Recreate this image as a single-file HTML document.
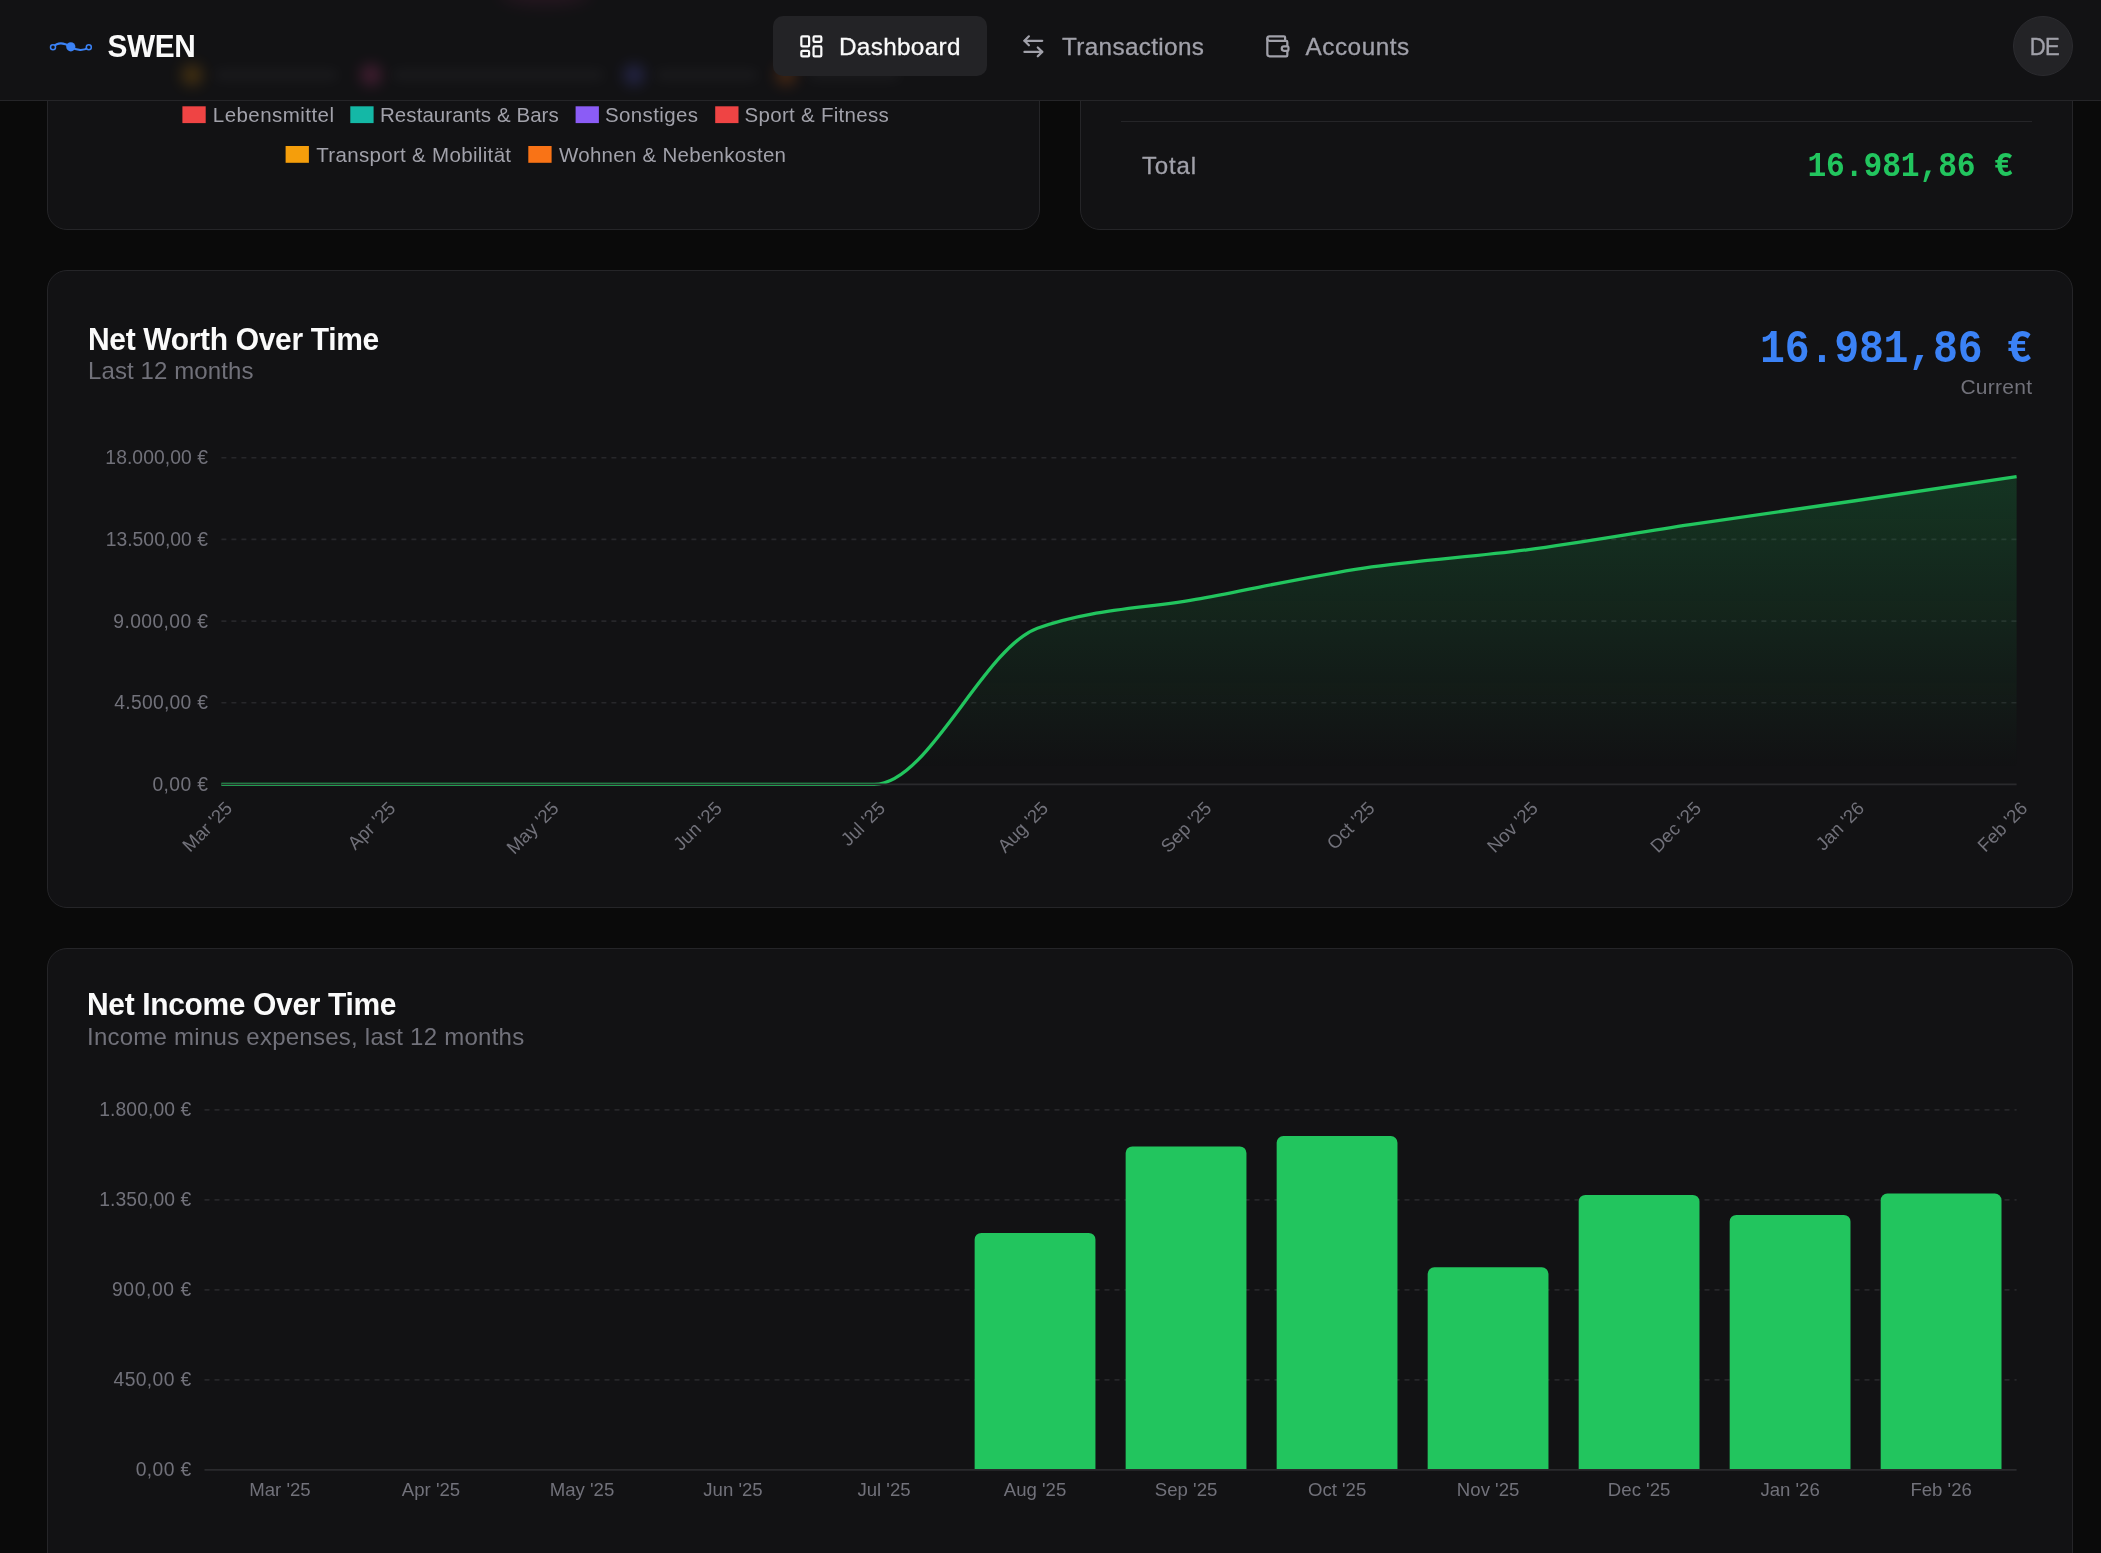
<!DOCTYPE html>
<html lang="en"><head><meta charset="utf-8"><title>SWEN – Dashboard</title>
<style>
*{box-sizing:border-box;margin:0;padding:0}
html,body{width:2101px;height:1553px;overflow:hidden;background:#0a0a0a;}
body{position:relative;font-family:"Liberation Sans", sans-serif;color:#fafafa;-webkit-font-smoothing:antialiased}
.t{position:absolute;white-space:pre;}
.m{font-family:"Liberation Mono", monospace}
.card{position:absolute;background:#121214;border:1px solid #252528;border-radius:20px;}
header{will-change:transform;position:absolute;left:0;top:0;width:2101px;height:101px;background:#121214;border-bottom:1px solid #252528;z-index:5;overflow:hidden}
svg{position:absolute;left:0;top:0;overflow:visible}
.sw{position:absolute;width:23.3px;height:17px}
nav a{position:absolute;display:block;text-decoration:none}
.blob{position:absolute;border-radius:50%;filter:blur(9px)}
</style></head><body>

<main style="position:absolute;left:0;top:0;width:2101px;height:1553px;overflow:hidden;will-change:transform">
<section class="card" style="left:47px;top:-300px;width:993px;height:530px"></section>
<ul style="list-style:none">
<li><div class="t" id="lg1_0" style="top:104.85px;font-size:20.5px;line-height:20.5px;color:#a1a1aa;font-weight:400;letter-spacing:0.455px;left:212.80px;">Lebensmittel</div></li>
<li><div class="t" id="lg1_1" style="top:104.85px;font-size:20.5px;line-height:20.5px;color:#a1a1aa;font-weight:400;letter-spacing:0.059px;left:380.00px;">Restaurants &amp; Bars</div></li>
<li><div class="t" id="lg1_2" style="top:104.85px;font-size:20.5px;line-height:20.5px;color:#a1a1aa;font-weight:400;letter-spacing:0.375px;left:605.00px;">Sonstiges</div></li>
<li><div class="t" id="lg1_3" style="top:104.85px;font-size:20.5px;line-height:20.5px;color:#a1a1aa;font-weight:400;letter-spacing:0.289px;left:744.60px;">Sport &amp; Fitness</div></li>
<li><div class="t" id="lg2_0" style="top:144.65px;font-size:20.5px;line-height:20.5px;color:#a1a1aa;font-weight:400;letter-spacing:0.325px;left:316.20px;">Transport &amp; Mobilität</div></li>
<li><div class="t" id="lg2_1" style="top:144.65px;font-size:20.5px;line-height:20.5px;color:#a1a1aa;font-weight:400;letter-spacing:0.269px;left:559.00px;">Wohnen &amp; Nebenkosten</div></li>
</ul>
<svg width="2101" height="180" viewBox="0 0 2101 180"><rect x="182.4" y="106.3" width="23.3" height="16.8" fill="#ef4444"/><rect x="350.3" y="106.3" width="23.3" height="16.8" fill="#14b8a6"/><rect x="575.6" y="106.3" width="23.3" height="16.8" fill="#8b5cf6"/><rect x="715.2" y="106.3" width="23.3" height="16.8" fill="#ef4444"/><rect x="285.6" y="146.0" width="23.3" height="16.8" fill="#f59e0b"/><rect x="528.3" y="146.0" width="23.3" height="16.8" fill="#f97316"/></svg>
<section class="card" style="left:1080px;top:-300px;width:993px;height:530px"></section>
<div style="position:absolute;left:1121px;top:121px;width:911px;height:1px;background:#252528"></div>
<div class="t" id="total" style="top:153.98px;font-size:24px;line-height:24px;color:#a1a1aa;font-weight:400;letter-spacing:0.850px;left:1142.00px;-webkit-text-stroke:0.3px #a1a1aa;">Total</div>
<div class="t m" id="totalv" style="top:152.00px;font-size:31.3px;line-height:31.3px;color:#22c55e;font-weight:700;letter-spacing:-0.100px;right:88.00px;margin-right:0.100px;transform:scaleY(1.13);transform-origin:50% 24.00px;">16.981,86 €</div>
<section class="card" style="left:47px;top:270px;width:2026px;height:638px"></section>
<div class="t" id="nw_title" style="top:324.81px;font-size:30px;line-height:30px;color:#fafafa;font-weight:700;letter-spacing:-0.333px;left:88.00px;transform:scaleY(1.07);transform-origin:50% 25.40px;">Net Worth Over Time</div>
<div class="t" id="nw_sub" style="top:358.68px;font-size:24px;line-height:24px;color:#71717a;font-weight:400;letter-spacing:0.100px;left:88.00px;">Last 12 months</div>
<div class="t m" id="nw_val" style="top:330.28px;font-size:41.5px;line-height:41.5px;color:#3b82f6;font-weight:700;letter-spacing:-0.200px;right:69.00px;margin-right:0.200px;transform:scaleY(1.13);transform-origin:50% 31.82px;">16.981,86 €</div>
<div class="t" id="nw_cur" style="top:376.22px;font-size:21px;line-height:21px;color:#71717a;font-weight:400;letter-spacing:0.249px;right:69.00px;margin-right:-0.249px;">Current</div>
<svg width="2101" height="1553" viewBox="0 0 2101 1553" font-family='"Liberation Sans", sans-serif'>
<defs><linearGradient id="gnw" gradientUnits="userSpaceOnUse" x1="0" y1="476" x2="0" y2="784"><stop offset="0.05" stop-color="#22c55e" stop-opacity="0.185"/><stop offset="0.95" stop-color="#22c55e" stop-opacity="0"/></linearGradient></defs>
<g stroke="#27272a" stroke-width="1.67" stroke-dasharray="5 5" fill="none">
<line x1="221.4" y1="457.75" x2="2016.6" y2="457.75"/>
<line x1="221.4" y1="539.41" x2="2016.6" y2="539.41"/>
<line x1="221.4" y1="621.08" x2="2016.6" y2="621.08"/>
<line x1="221.4" y1="702.74" x2="2016.6" y2="702.74"/>
</g>
<path d="M221.40,784.40C275.80,784.40 330.20,784.40 384.60,784.40C439.00,784.40 493.40,784.40 547.80,784.40C602.20,784.40 656.60,784.40 711.00,784.40C765.40,784.40 819.80,784.40 874.20,784.40C928.60,784.40 983.00,648.10 1037.40,628.30C1091.80,608.50 1146.20,608.63 1200.60,598.60C1255.00,588.57 1309.40,576.23 1363.80,568.10C1418.20,559.97 1472.60,557.05 1527.00,549.80C1581.40,542.55 1635.80,532.73 1690.20,524.60C1744.60,516.47 1799.00,509.00 1853.40,501.00C1907.80,493.00 1962.20,484.80 2016.60,476.60L2016.60,784.4L221.40,784.4Z" fill="url(#gnw)"/>
<path d="M221.40,784.40C275.80,784.40 330.20,784.40 384.60,784.40C439.00,784.40 493.40,784.40 547.80,784.40C602.20,784.40 656.60,784.40 711.00,784.40C765.40,784.40 819.80,784.40 874.20,784.40C928.60,784.40 983.00,648.10 1037.40,628.30C1091.80,608.50 1146.20,608.63 1200.60,598.60C1255.00,588.57 1309.40,576.23 1363.80,568.10C1418.20,559.97 1472.60,557.05 1527.00,549.80C1581.40,542.55 1635.80,532.73 1690.20,524.60C1744.60,516.47 1799.00,509.00 1853.40,501.00C1907.80,493.00 1962.20,484.80 2016.60,476.60" fill="none" stroke="#22c55e" stroke-width="3.33" stroke-linejoin="round"/>
<line x1="221.4" y1="784.4" x2="2016.6" y2="784.4" stroke="#2a2a2d" stroke-width="1.67"/>
<g fill="#71717a" font-size="19.3" text-anchor="end">
<text x="208.08" y="464.4" letter-spacing="0.080">18.000,00 €</text>
<text x="208.05" y="546.0" letter-spacing="0.050">13.500,00 €</text>
<text x="208.39" y="627.7" letter-spacing="0.389">9.000,00 €</text>
<text x="208.28" y="709.3" letter-spacing="0.278">4.500,00 €</text>
<text x="208.40" y="791.0" letter-spacing="0.400">0,00 €</text>
</g>
<g fill="#71717a" font-size="18.6" text-anchor="end">
<text x="233.4" y="809.5" transform="rotate(-45 233.4 809.5)">Mar '25</text>
<text x="396.6" y="809.5" transform="rotate(-45 396.6 809.5)">Apr '25</text>
<text x="559.8" y="809.5" transform="rotate(-45 559.8 809.5)">May '25</text>
<text x="723.0" y="809.5" transform="rotate(-45 723.0 809.5)">Jun '25</text>
<text x="886.2" y="809.5" transform="rotate(-45 886.2 809.5)">Jul '25</text>
<text x="1049.4" y="809.5" transform="rotate(-45 1049.4 809.5)">Aug '25</text>
<text x="1212.6" y="809.5" transform="rotate(-45 1212.6 809.5)">Sep '25</text>
<text x="1375.8" y="809.5" transform="rotate(-45 1375.8 809.5)">Oct '25</text>
<text x="1539.0" y="809.5" transform="rotate(-45 1539.0 809.5)">Nov '25</text>
<text x="1702.2" y="809.5" transform="rotate(-45 1702.2 809.5)">Dec '25</text>
<text x="1865.4" y="809.5" transform="rotate(-45 1865.4 809.5)">Jan '26</text>
<text x="2028.6" y="809.5" transform="rotate(-45 2028.6 809.5)">Feb '26</text>
</g>
</svg>
<section class="card" style="left:47px;top:948px;width:2026px;height:700px"></section>
<div class="t" id="ni_title" style="top:989.81px;font-size:30px;line-height:30px;color:#fafafa;font-weight:700;letter-spacing:-0.360px;left:87.00px;transform:scaleY(1.07);transform-origin:50% 25.40px;">Net Income Over Time</div>
<div class="t" id="ni_sub" style="top:1024.78px;font-size:24px;line-height:24px;color:#71717a;font-weight:400;letter-spacing:0.249px;left:87.00px;">Income minus expenses, last 12 months</div>
<svg width="2101" height="1553" viewBox="0 0 2101 1553" font-family='"Liberation Sans", sans-serif'>
<g stroke="#27272a" stroke-width="1.67" stroke-dasharray="5 5" fill="none">
<line x1="204.5" y1="1109.8" x2="2016.6" y2="1109.8"/>
<line x1="204.5" y1="1199.8" x2="2016.6" y2="1199.8"/>
<line x1="204.5" y1="1289.8" x2="2016.6" y2="1289.8"/>
<line x1="204.5" y1="1379.8" x2="2016.6" y2="1379.8"/>
</g>
<g fill="#22c55e">
<path d="M974.64,1469.8V1239.57a6.67,6.67 0 0 1 6.67,-6.67h107.47a6.67,6.67 0 0 1 6.67,6.67V1469.8Z"/>
<path d="M1125.65,1469.8V1153.07a6.67,6.67 0 0 1 6.67,-6.67h107.47a6.67,6.67 0 0 1 6.67,6.67V1469.8Z"/>
<path d="M1276.66,1469.8V1142.77a6.67,6.67 0 0 1 6.67,-6.67h107.47a6.67,6.67 0 0 1 6.67,6.67V1469.8Z"/>
<path d="M1427.67,1469.8V1273.87a6.67,6.67 0 0 1 6.67,-6.67h107.47a6.67,6.67 0 0 1 6.67,6.67V1469.8Z"/>
<path d="M1578.68,1469.8V1201.57a6.67,6.67 0 0 1 6.67,-6.67h107.47a6.67,6.67 0 0 1 6.67,6.67V1469.8Z"/>
<path d="M1729.68,1469.8V1221.57a6.67,6.67 0 0 1 6.67,-6.67h107.47a6.67,6.67 0 0 1 6.67,6.67V1469.8Z"/>
<path d="M1880.69,1469.8V1200.17a6.67,6.67 0 0 1 6.67,-6.67h107.47a6.67,6.67 0 0 1 6.67,6.67V1469.8Z"/>
</g>
<line x1="204.5" y1="1469.8" x2="2016.6" y2="1469.8" stroke="#2a2a2d" stroke-width="1.67"/>
<g fill="#71717a" font-size="19.3" text-anchor="end">
<text x="191.29" y="1116.4" letter-spacing="0.089">1.800,00 €</text>
<text x="191.29" y="1206.4" letter-spacing="0.089">1.350,00 €</text>
<text x="191.79" y="1296.4" letter-spacing="0.586">900,00 €</text>
<text x="191.57" y="1386.4" letter-spacing="0.371">450,00 €</text>
<text x="191.56" y="1476.4" letter-spacing="0.360">0,00 €</text>
</g>
<g fill="#71717a" font-size="18.6" text-anchor="middle">
<text x="280.0" y="1495.6">Mar '25</text>
<text x="431.0" y="1495.6">Apr '25</text>
<text x="582.0" y="1495.6">May '25</text>
<text x="733.0" y="1495.6">Jun '25</text>
<text x="884.0" y="1495.6">Jul '25</text>
<text x="1035.0" y="1495.6">Aug '25</text>
<text x="1186.1" y="1495.6">Sep '25</text>
<text x="1337.1" y="1495.6">Oct '25</text>
<text x="1488.1" y="1495.6">Nov '25</text>
<text x="1639.1" y="1495.6">Dec '25</text>
<text x="1790.1" y="1495.6">Jan '26</text>
<text x="1941.1" y="1495.6">Feb '26</text>
</g>
</svg>
</main>
<header>
<div class="blob" style="left:181.0px;top:64px;width:22px;height:22px;background:#f59e0b;opacity:.2;filter:blur(7px)"></div>
<div class="blob" style="left:360.0px;top:64px;width:22px;height:22px;background:#ec4899;opacity:.2;filter:blur(7px)"></div>
<div class="blob" style="left:622.6px;top:64px;width:22px;height:22px;background:#6366f1;opacity:.2;filter:blur(7px)"></div>
<div class="blob" style="left:775.0px;top:64px;width:22px;height:22px;background:#f97316;opacity:.2;filter:blur(7px)"></div>
<div class="blob" style="left:214px;top:69px;width:124px;height:12px;border-radius:6px;background:#a1a1aa;opacity:.05;filter:blur(6px)"></div>
<div class="blob" style="left:392px;top:69px;width:212px;height:12px;border-radius:6px;background:#a1a1aa;opacity:.05;filter:blur(6px)"></div>
<div class="blob" style="left:655px;top:69px;width:103px;height:12px;border-radius:6px;background:#a1a1aa;opacity:.05;filter:blur(6px)"></div>
<div class="blob" style="left:808px;top:69px;width:92px;height:12px;border-radius:6px;background:#a1a1aa;opacity:.05;filter:blur(6px)"></div>
<div class="blob" style="left:500px;top:-18px;width:90px;height:22px;background:#ec4899;opacity:.10"></div>
<svg width="46" height="20" viewBox="0 0 46 20" style="left:48px;top:36.5px">
<path d="M5.2 10C9 5.6 14.5 4.6 22.6 9.6C28.5 13.6 35.5 14.2 40.6 10.4" fill="none" stroke="#3b82f6" stroke-width="2.2" stroke-linecap="round"/>
<circle cx="5" cy="10.2" r="2.5" fill="#121214" stroke="#3b82f6" stroke-width="1.5"/>
<circle cx="40.8" cy="10.2" r="2.5" fill="#121214" stroke="#3b82f6" stroke-width="1.5"/>
<circle cx="22.8" cy="9.8" r="4.6" fill="#3b82f6"/>
</svg>
<div class="t" id="swen" style="top:32.37px;font-size:29.8px;line-height:29.8px;color:#fafafa;font-weight:700;letter-spacing:-0.333px;left:107.50px;transform:scaleY(1.075);transform-origin:50% 25.23px;">SWEN</div>
<nav>
<a style="left:772.6px;top:16px;width:214.7px;height:60px;border-radius:10px;background:#232326"></a>
<svg width="26.67" height="26.67" viewBox="0 0 24 24" style="left:798.2px;top:33.1px" stroke="#fafafa" fill="none" stroke-width="2" stroke-linecap="round" stroke-linejoin="round"><rect width="7" height="9" x="3" y="3" rx="1"/><rect width="7" height="5" x="14" y="3" rx="1"/><rect width="7" height="9" x="14" y="12" rx="1"/><rect width="7" height="5" x="3" y="16" rx="1"/></svg>
<div class="t" id="n_dash" style="top:35.23px;font-size:24.3px;line-height:24.3px;color:#fafafa;font-weight:400;letter-spacing:0.328px;left:839.00px;-webkit-text-stroke:0.3px #fafafa;">Dashboard</div>
<svg width="26.67" height="26.67" viewBox="0 0 24 24" style="left:1020.1px;top:33.2px" stroke="#a1a1aa" fill="none" stroke-width="2" stroke-linecap="round" stroke-linejoin="round"><path d="M8 3 4 7l4 4"/><path d="M4 7h16"/><path d="m16 21 4-4-4-4"/><path d="M20 17H4"/></svg>
<div class="t" id="n_tx" style="top:35.23px;font-size:24.3px;line-height:24.3px;color:#a1a1aa;font-weight:400;letter-spacing:0.342px;left:1062.00px;-webkit-text-stroke:0.3px #a1a1aa;">Transactions</div>
<svg width="26.67" height="26.67" viewBox="0 0 24 24" style="left:1264.3px;top:33.3px" stroke="#a1a1aa" fill="none" stroke-width="2" stroke-linecap="round" stroke-linejoin="round"><path d="M19 7V4a1 1 0 0 0-1-1H5a2 2 0 0 0 0 4h15a1 1 0 0 1 1 1v4h-3a2 2 0 0 0 0 4h3a1 1 0 0 0 1-1v-2a1 1 0 0 0-1-1"/><path d="M3 5v14a2 2 0 0 0 2 2h15a1 1 0 0 0 1-1v-4"/></svg>
<div class="t" id="n_acc" style="top:35.23px;font-size:24.3px;line-height:24.3px;color:#a1a1aa;font-weight:400;letter-spacing:0.504px;left:1305.60px;-webkit-text-stroke:0.3px #a1a1aa;">Accounts</div>
</nav>
<div style="position:absolute;left:2013px;top:16px;width:60px;height:60px;border-radius:50%;background:#232326;border:1px solid #2b2b2f"></div>
<div class="t" id="avatar" style="top:37.08px;font-size:22px;line-height:22px;color:#a1a1aa;font-weight:400;letter-spacing:-0.700px;left:1544.30px;width:1000px;text-align:center;transform:scaleY(1.1);transform-origin:50% 18.62px;-webkit-text-stroke:0.35px #a1a1aa;">DE</div>
</header>
</body></html>
